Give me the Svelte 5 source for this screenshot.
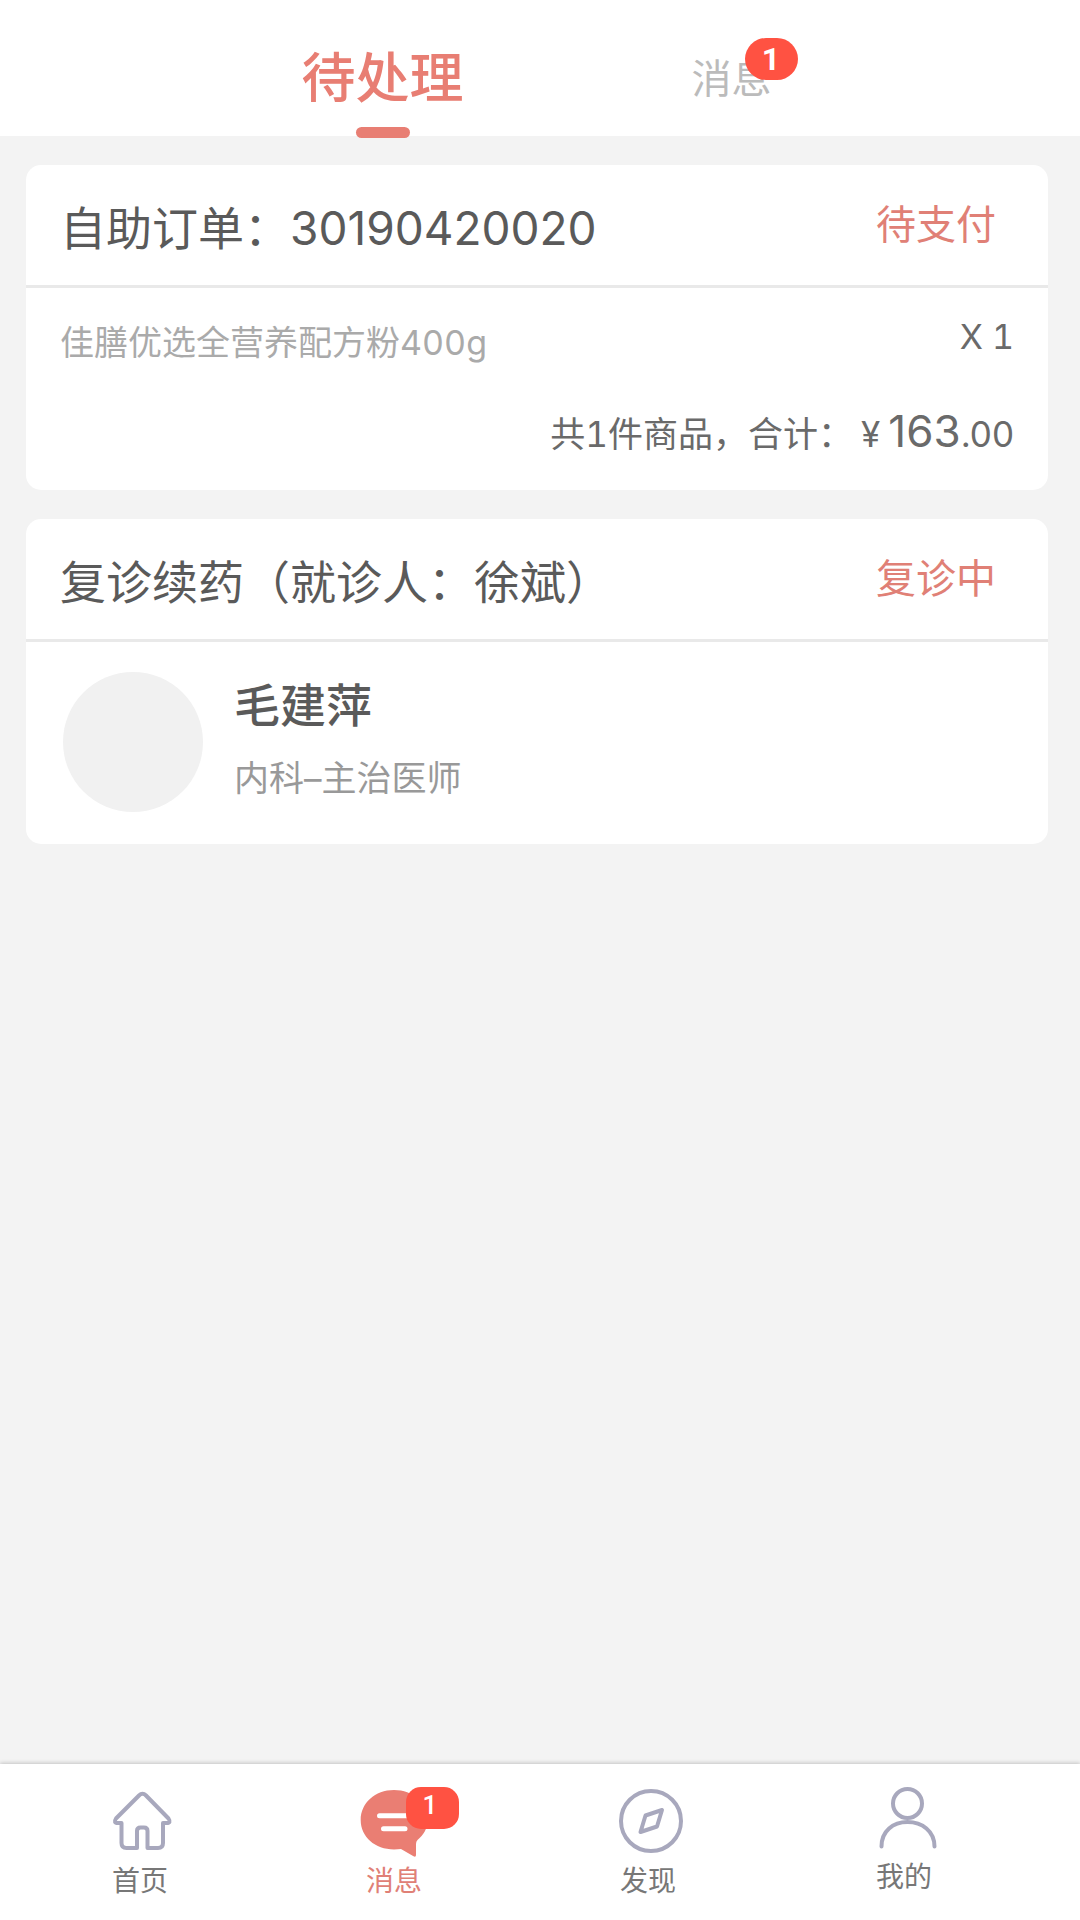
<script>
  let active = $state('pending');
</script>

<div class="page">
  <header class="tabs" role="tablist">
    <button class="tab" class:active={active === 'pending'} role="tab" aria-selected={active === 'pending'} onclick={() => (active = 'pending')}>
      <span class="tab-label">待处理</span>
    </button>
    <button class="tab" class:active={active === 'messages'} role="tab" aria-selected={active === 'messages'} onclick={() => (active = 'messages')}>
      <span class="tab-label">消息<span class="badge pill">1</span></span>
    </button>
  </header>

  <main>
    <article class="card">
      <header class="card-head">
        <h2>自助订单：30190420020</h2>
        <span class="status">待支付</span>
      </header>
      <div class="order">
        <div class="item">
          <span class="product">佳膳优选全营养配方粉400g</span>
          <span class="quantity">X 1</span>
        </div>
        <p class="total">
          <span>共1件商品，合计：</span>
          <span class="price">¥<span class="amount">163</span>.00</span>
        </p>
      </div>
    </article>

    <article class="card">
      <header class="card-head">
        <h2>复诊续药（就诊人：徐斌）</h2>
        <span class="status">复诊中</span>
      </header>
      <div class="doctor">
        <div class="avatar"></div>
        <div>
          <h3>毛建萍</h3>
          <p class="dept">内科–主治医师</p>
        </div>
      </div>
    </article>
  </main>

  <nav>
    <a href="#home">
      <svg viewBox="0 0 72 76" aria-hidden="true">
        <path d="M35 11.5 12 34.5q-3 4.5 2 4.5h3.5v20q0 5 5 5H33V47q0-3.500 3.500-3.500h3.500q3.500 0 3.500 3.500v17H54q5 0 5-5V39h3.500q5 0 2-4.500L42 11.500q-3.500-3.500-7 0z" />
      </svg>
      <span>首页</span>
    </a>
    <a href="#messages" class="current">
      <span class="icon">
        <svg viewBox="0 0 72 76" aria-hidden="true">
          <path class="bubble" d="M36 6C55 6 69.500 19 69.500 36c0 9-4 15-10 20q-1.500 1.500-1.500 4v11q0 2.500-2.500 1.300L43 65q-3 .4-7 .4C17 65.400 2.700 53 2.700 36S17 6 36 6z" />
          <path class="line" d="M21.500 31.700H52M25.500 44.700H47" />
        </svg>
        <span class="badge">1</span>
      </span>
      <span>消息</span>
    </a>
    <a href="#discover">
      <svg viewBox="0 0 72 76" aria-hidden="true">
        <circle cx="39" cy="37" r="30" />
        <path d="M50 26 33.500 31.500 28.500 48 45 42.500z" />
      </svg>
      <span>发现</span>
    </a>
    <a href="#mine">
      <svg class="short" viewBox="0 0 72 72" aria-hidden="true">
        <circle cx="39.500" cy="19.500" r="14.500" />
        <path d="M13.500 62.500C13.500 47 25 38 39.500 38S66.500 47 66.500 62.500" />
      </svg>
      <span>我的</span>
    </a>
  </nav>
</div>

<style>
  :global(body) {
    margin: 0;
    background: #f3f3f3;
  }

  .page {
    display: flex;
    flex-direction: column;
    min-height: 100vh;
    font-family: Inter, "Noto Sans CJK SC", sans-serif;
    color: #5a5a5a;
  }

  h2, h3, p {
    margin: 0;
    font-weight: 400;
  }

  .tabs {
    display: flex;
    height: 136px;
    padding: 0 174px 0 208px;
    background: #fff;
  }

  .tab {
    position: relative;
    flex: 1;
    padding: 22px 0 0;
    border: 0;
    background: none;
    font: inherit;
    font-size: 40px;
    line-height: 60px;
    color: #bbb;
    cursor: pointer;
  }

  .tab.active {
    font-size: 54px;
    font-weight: 500;
    color: #e87e73;
  }

  .tab.active::after {
    content: "";
    position: absolute;
    left: 50%;
    bottom: -2px;
    width: 54px;
    height: 11px;
    margin-left: -27px;
    border-radius: 6px;
    background: #e87e73;
  }

  .tab-label {
    position: relative;
  }

  .badge {
    position: absolute;
    top: 3px;
    left: 48px;
    box-sizing: border-box;
    width: 53px;
    height: 42px;
    padding-right: 5px;
    border-radius: 15px;
    background: #ff5242;
    color: #fff;
    font-family: Roboto, sans-serif;
    font-size: 26px;
    font-weight: 500;
    line-height: 36px;
    text-align: center;
  }

  .badge.pill {
    top: -16px;
    left: 53px;
    padding: 0;
    border-radius: 21px;
    font-size: 32px;
    font-weight: 700;
    line-height: 42px;
  }

  main {
    display: flex;
    flex: 1;
    flex-direction: column;
    gap: 29px;
    padding: 29px 32px 29px 26px;
  }

  .card {
    border-radius: 15px;
    background: #fff;
  }

  .card-head {
    display: flex;
    justify-content: space-between;
    padding: 30px 52px 24px 34px;
    border-bottom: 3px solid #e9e9e9;
  }

  h2 {
    font-size: 46px;
    line-height: 66px;
  }

  .status {
    font-size: 40px;
    line-height: 60px;
    color: #e08076;
  }

  .order {
    padding: 23px 34px 26px;
    font-size: 35px;
    font-variant-numeric: tabular-nums;
    line-height: 60px;
    color: #6a6a6a;
  }

  .item {
    display: flex;
    justify-content: space-between;
    margin-bottom: 26px;
    font-size: 34px;
  }

  .product {
    line-height: 64px;
    color: #aaa;
  }

  .quantity {
    line-height: 52px;
  }

  .total {
    display: flex;
    justify-content: flex-end;
    align-items: baseline;
    gap: 8px;
  }

  .price {
    font-variant-numeric: normal;
  }

  .amount {
    margin-left: 8px;
    font-size: 44px;
  }

  .doctor {
    display: flex;
    gap: 31px;
    padding: 30px 37px 32px;
  }

  .avatar {
    width: 140px;
    height: 140px;
    border-radius: 50%;
    background: #f1f1f1;
  }

  h3 {
    font-size: 46px;
    font-weight: 500;
    line-height: 66px;
  }

  .dept {
    margin-top: 10px;
    font-size: 35px;
    line-height: 60px;
    color: #999;
  }

  nav {
    display: grid;
    grid-template-columns: 254fr 254fr 254fr 258fr;
    height: 136px;
    padding: 20px 47px 0 13px;
    background: #fff;
    box-shadow: 0 -1px 4px rgba(0, 0, 0, 0.2);
  }

  nav a {
    display: flex;
    flex-direction: column;
    align-items: center;
    font-size: 28px;
    line-height: 42px;
    color: #777;
    text-decoration: none;
  }

  nav .current {
    color: #e08076;
  }

  .icon {
    position: relative;
  }

  svg {
    display: block;
    width: 72px;
    height: 76px;
    fill: none;
    stroke: #a8a8bd;
    stroke-width: 4;
    stroke-linecap: round;
    stroke-linejoin: round;
  }

  svg.short {
    height: 72px;
  }

  .bubble {
    fill: #ea7e73;
    stroke: none;
  }

  .line {
    stroke: #fff;
    stroke-width: 5;
  }
</style>
